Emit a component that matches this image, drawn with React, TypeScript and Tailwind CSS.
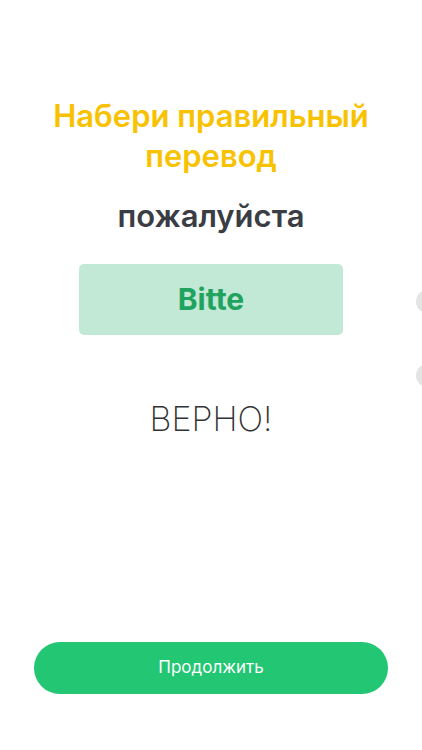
export default function App() {
    return (
        <div className="relative w-[422px] h-[750px] bg-white overflow-hidden font-['Inter',sans-serif] flex flex-col items-center">
            <h1 className="mt-[96px] w-[340px] text-center text-[31px] leading-[40px] font-semibold text-[#f8c200]">
                Набери правильный перевод
            </h1>
            <p className="mt-[20px] text-[31px] leading-[40px] font-semibold text-[#3a3d44]">пожалуйста</p>
            <div className="mt-[28px] w-[264px] h-[71px] rounded-[5px] bg-[#c1e9d6] flex items-center justify-center">
                <span className="text-[30px] font-bold text-[#1fa35f]">Bitte</span>
            </div>
            <p className="mt-[62px] text-[34px] leading-[44px] font-extralight text-[#333333]">ВЕРНО!</p>
            <div className="flex-1" />
            <button className="mb-[56px] w-[354px] h-[52px] rounded-full bg-[#22c673] text-white text-[17px] font-normal">
                Продолжить
            </button>
            <div className="absolute left-[416px] top-[290px] w-[23px] h-[23px] rounded-full bg-[#e4e4e4]" />
            <div className="absolute left-[416px] top-[364px] w-[23px] h-[23px] rounded-full bg-[#e4e4e4]" />
        </div>
    )
}
